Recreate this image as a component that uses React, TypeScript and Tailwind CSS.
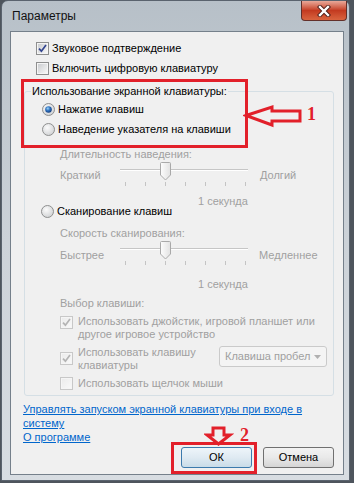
function CheckBox({ checked, disabled }: { checked?: boolean; disabled?: boolean }) {
  return (
    <svg width="13" height="13" viewBox="0 0 13 13" className="shrink-0">
      <defs>
        <linearGradient id="cbE" x1="0" y1="0" x2="1" y2="1">
          <stop offset="0" stopColor="#cbcdd0" />
          <stop offset="1" stopColor="#f7f7f7" />
        </linearGradient>
        <linearGradient id="cbD" x1="0" y1="0" x2="1" y2="1">
          <stop offset="0" stopColor="#ececec" />
          <stop offset="1" stopColor="#f8f8f8" />
        </linearGradient>
      </defs>
      <rect x="0.5" y="0.5" width="12" height="12" fill="#f5f5f5" stroke={disabled ? "#c8c8c8" : "#8e8f8f"} />
      <rect x="2" y="2" width="9" height="9" fill={disabled ? "url(#cbD)" : "url(#cbE)"} />
      {checked && (
        <path
          d="M3 6.6 L5.4 9.2 L10 3"
          fill="none"
          stroke={disabled ? "#b4b4b4" : "#33458f"}
          strokeWidth="1.7"
        />
      )}
    </svg>
  );
}

function Radio({ checked }: { checked?: boolean }) {
  return (
    <svg width="13" height="13" viewBox="0 0 13 13" className="shrink-0">
      <defs>
        <radialGradient id="rdF" cx="0.4" cy="0.35" r="0.7">
          <stop offset="0" stopColor="#fbfbfb" />
          <stop offset="1" stopColor="#cfd1d3" />
        </radialGradient>
        <radialGradient id="rdC" cx="0.4" cy="0.35" r="0.65">
          <stop offset="0" stopColor="#9fd6f6" />
          <stop offset="0.5" stopColor="#2f72c0" />
          <stop offset="1" stopColor="#17407f" />
        </radialGradient>
      </defs>
      <circle cx="6.5" cy="6.5" r="6" fill="url(#rdF)" stroke="#8e8f8f" />
      {checked && <circle cx="6.5" cy="6.5" r="3.3" fill="url(#rdC)" />}
    </svg>
  );
}

function Slider() {
  const ticks = [5, 25, 45, 65, 85, 105, 125];
  return (
    <div className="relative w-[128px] h-[24px] shrink-0">
      <div className="absolute left-0 right-0 top-[7px] h-[2px] border-t border-[#c6c6c6] border-b border-b-[#ffffff]" />
      {ticks.map((t) => (
        <div key={t} className="absolute top-[20px] w-px h-[4px] bg-[#c4c4c4]" style={{ left: t }} />
      ))}
      <svg width="11" height="19" viewBox="0 0 11 19" className="absolute left-[40px] top-0">
        <defs>
          <linearGradient id="th" x1="0" y1="0" x2="1" y2="0">
            <stop offset="0" stopColor="#fdfdfd" />
            <stop offset="1" stopColor="#e2e2e2" />
          </linearGradient>
        </defs>
        <path d="M0.5 1.5 Q0.5 0.5 1.5 0.5 H9.5 Q10.5 0.5 10.5 1.5 V13 L5.5 18 L0.5 13 Z" fill="url(#th)" stroke="#a9a9a9" />
      </svg>
    </div>
  );
}

export default function App() {
  const gray = "text-[#a0a0a0]";
  return (
    <div className="w-[354px] h-[483px] bg-[#4e555d] relative overflow-hidden font-['Liberation_Sans',Arial,sans-serif] text-[11px] text-black">
      <div className="ml-px w-[349px] h-[481px] rounded-t-[7px] border border-[#5a636e] bg-linear-to-b from-[#b7c0c8] via-[#ccd2d8] to-[#d8dde2] flex flex-col">
        {/* title bar */}
        <div className="h-[30px] flex shrink-0">
          <div className="pl-[10px] pt-[8px] leading-[15px] text-[12px] text-[#111]">Параметры</div>
          <div className="ml-auto mr-[2px] w-[46px] h-[20px] rounded-b-[4px] border border-t-0 border-[#63302a] bg-linear-to-b from-[#e8a899] via-[#c33a20] to-[#d9643f] flex items-center justify-center">
            <svg width="14" height="12" viewBox="0 0 14 12">
              <path d="M3 2 L11 10 M11 2 L3 10" stroke="#4a1d18" strokeWidth="4.2" strokeLinecap="square" />
              <path d="M3 2 L11 10 M11 2 L3 10" stroke="#ffffff" strokeWidth="2.4" strokeLinecap="square" />
            </svg>
          </div>
        </div>

        {/* client area */}
        <div className="ml-[8px] w-[334px] h-[444px] border border-[#75808b] bg-[#f0f0f0] flex flex-col">
          <div className="pt-[6px] pl-[25px]">
            <div className="h-[20px] flex items-center gap-[3px]">
              <CheckBox checked />
              <span>Звуковое подтверждение</span>
            </div>
            <div className="h-[20px] flex items-center gap-[3px]">
              <CheckBox />
              <span>Включить цифровую клавиатуру</span>
            </div>
          </div>

          <fieldset className="mt-[6px] ml-[13px] w-[310px] border border-[#d5dfe5] rounded-[3px] pb-[5px]">
            <legend className="ml-[6px] px-[1px] leading-[15px]">Использование экранной клавиатуры:</legend>
            <div className="pl-[17px]">
              <div className="h-[20px] flex items-center gap-[3px]">
                <Radio checked />
                <span>Нажатие клавиш</span>
              </div>
              <div className="h-[20px] flex items-center gap-[3px]">
                <Radio />
                <span>Наведение указателя на клавиши</span>
              </div>
            </div>

            <div className={`pl-[35px] ${gray}`}>
              <div className="mt-[7px] h-[16px] leading-[16px]">Длительность наведения:</div>
              <div className="flex">
                <div className="w-[60px] mt-[5px] leading-[16px]">Краткий</div>
                <Slider />
                <div className="ml-[12px] mt-[5px] leading-[16px]">Долгий</div>
              </div>
              <div className="mt-[8px] ml-[138px] h-[14px] leading-[14px]">1 секунда</div>
            </div>

            <div className="-mt-[7px] pl-[16px] h-[20px] flex items-center gap-[3px]">
              <Radio />
              <span>Сканирование клавиш</span>
            </div>

            <div className={`pl-[35px] ${gray}`}>
              <div className="mt-[4px] h-[16px] leading-[16px]">Скорость сканирования:</div>
              <div className="flex">
                <div className="w-[60px] mt-[6px] leading-[16px]">Быстрее</div>
                <Slider />
                <div className="ml-[11px] mt-[6px] leading-[16px]">Медленнее</div>
              </div>
              <div className="mt-[12px] ml-[138px] h-[14px] leading-[14px]">1 секунда</div>
              <div className="mt-[4px] h-[16px] leading-[16px]">Выбор клавиши:</div>

              <div className="mt-[4px] flex items-start gap-[5px] leading-[13px]">
                <div className="mt-px">
                  <CheckBox checked disabled />
                </div>
                <div className="whitespace-nowrap">
                  Использовать джойстик, игровой планшет или
                  <br />
                  другое игровое устройство
                </div>
              </div>
              <div className="mt-[5px] flex items-start leading-[13px]">
                <div className="mt-[6px] mr-[5px]">
                  <CheckBox checked disabled />
                </div>
                <div className="w-[141px] whitespace-nowrap">
                  Использовать клавишу
                  <br />
                  клавиатуры
                </div>
                <div className="w-[108px] h-[21px] rounded-[3px] border border-[#cacaca] bg-[#f4f4f4] flex items-center pl-[5px] pr-[5px] whitespace-nowrap">
                  <span>Клавиша пробел</span>
                  <svg width="7" height="4" viewBox="0 0 7 4" className="ml-auto">
                    <path d="M0 0 H7 L3.5 4 Z" fill="#b0b0b0" />
                  </svg>
                </div>
              </div>
              <div className="mt-[5px] flex items-center gap-[5px] leading-[13px]">
                <CheckBox disabled />
                <span>Использовать щелчок мыши</span>
              </div>
            </div>
          </fieldset>

          <div className="mt-[6px] pl-[12px] leading-[14px] text-[#0066cc] underline flex flex-col items-start">
            <span>
              Управлять запуском экранной клавиатуры при входе в
              <br />
              систему
            </span>
            <span>О программе</span>
          </div>

          <div className="mt-[3px] flex justify-end gap-[11px] pr-[9px]">
            <button className="w-[71px] h-[21px] rounded-[3px] border border-[#3c7aad] bg-linear-to-b from-[#eef5fa] via-[#dfeaf2] to-[#c9dce8] leading-[19px]">
              ОК
            </button>
            <button className="w-[71px] h-[21px] rounded-[3px] border border-[#707070] bg-linear-to-b from-[#f3f3f3] via-[#e9e9e9] to-[#d5d5d5] leading-[19px]">
              Отмена
            </button>
          </div>
        </div>
      </div>

      {/* annotations */}
      <div className="absolute left-[21px] top-[79px] w-[227px] h-[69px] border-[3px] border-[#e2202a]" />
      <svg width="62" height="24" viewBox="0 0 62 24" className="absolute left-[243px] top-[104px]">
        <path d="M3 11.5 L29 3 V7 H57 V17 H29 V21 Z" fill="none" stroke="#e2202a" strokeWidth="3" />
      </svg>
      <div className="absolute left-[307px] top-[104px] font-['Liberation_Serif',serif] font-bold text-[18px] leading-[20px] text-[#e2202a]">
        1
      </div>

      <div className="absolute left-[171px] top-[442px] w-[86px] h-[32px] border-[3px] border-[#e2202a]" />
      <svg width="30" height="21" viewBox="0 0 30 21" className="absolute left-[204px] top-[426px]">
        <path d="M9 2 H20 V9 H26 L14.5 18 L3 9 H9 Z" fill="none" stroke="#e2202a" strokeWidth="3" />
      </svg>
      <div className="absolute left-[240px] top-[425px] font-['Liberation_Serif',serif] font-bold text-[18px] leading-[20px] text-[#e2202a]">
        2
      </div>
    </div>
  );
}
